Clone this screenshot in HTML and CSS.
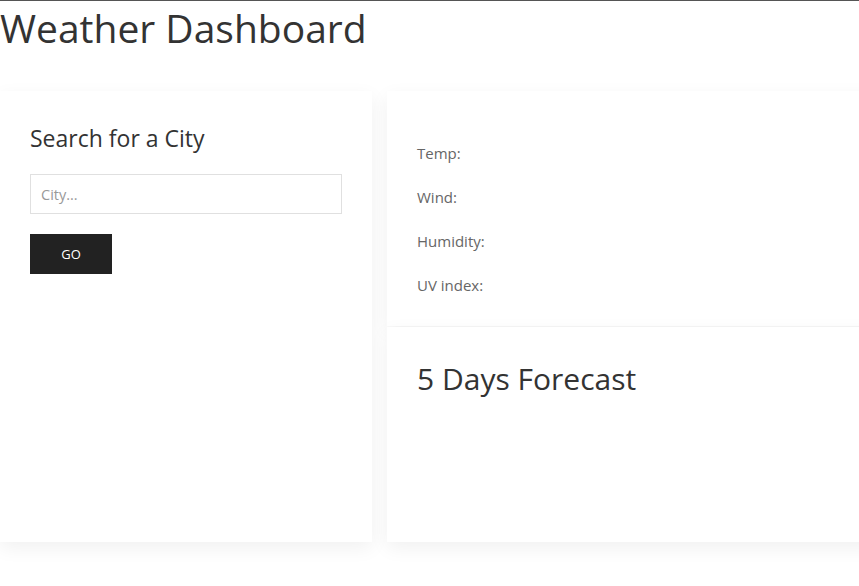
FILE: index.html
```html
<!DOCTYPE html>
<html lang="en">
<head>
<meta charset="utf-8">
<title>Weather Dashboard</title>
<link rel="stylesheet" href="styles.css">
</head>
<body>
<header class="top">
  <h1 class="title">Weather Dashboard</h1>
</header>
<main class="layout">
  <section class="card search">
    <h2 class="search-title">Search for a City</h2>
    <input class="city-input" type="text" placeholder="City...">
    <button class="go-btn" type="button">GO</button>
  </section>
  <div class="right">
    <section class="card current">
      <p class="stat">Temp:</p>
      <p class="stat">Wind:</p>
      <p class="stat">Humidity:</p>
      <p class="stat">UV index:</p>
    </section>
    <section class="card forecast">
      <h2 class="forecast-title">5 Days Forecast</h2>
    </section>
  </div>
</main>
</body>
</html>
```

FILE: styles.css
```css
html, body {
  margin: 0;
  padding: 0;
  overflow: hidden;
}
body {
  font-family: "Open Sans", "Noto Sans", sans-serif;
  color: #333;
  background: #fff;
  width: 859px;
  height: 586px;
}
.top {
  border-top: 1px solid #555;
}
.title {
  margin: 0;
  font-size: 39px;
  font-weight: 400;
  line-height: 54px;
  color: #333;
}
.layout {
  display: grid;
  grid-template-columns: 372px 490px;
  column-gap: 15px;
  margin-top: 36px;
}
.card {
  background: #fff;
  box-shadow: 0 6px 18px rgba(0, 0, 0, 0.06);
}
.search {
  padding: 30px 30px 0 30px;
  height: 451px;
  box-sizing: border-box;
  display: flex;
  flex-direction: column;
  align-items: flex-start;
}
.search-title {
  margin: 0;
  font-size: 23px;
  font-weight: 400;
  line-height: 34px;
  color: #333;
}
.city-input {
  margin-top: 19px;
  width: 312px;
  height: 40px;
  box-sizing: border-box;
  border: 1px solid #e0e0e0;
  padding: 0 10px;
  font-family: "Open Sans", sans-serif;
  font-size: 14.5px;
  color: #333;
  outline: none;
}
.city-input::placeholder {
  color: #999;
}
.go-btn {
  margin-top: 20px;
  width: 82px;
  height: 40px;
  border: 0;
  background: #222;
  color: #fff;
  font-family: "Open Sans", sans-serif;
  font-size: 13px;
}
.right {
  display: flex;
  flex-direction: column;
  gap: 1px;
}
.current {
  height: 235px;
  box-sizing: border-box;
  padding: 50px 30px 0 30px;
}
.stat {
  margin: 0;
  font-size: 15px;
  line-height: 24px;
  color: #666;
}
.stat + .stat {
  margin-top: 20px;
}
.forecast {
  height: 215px;
  box-sizing: border-box;
  padding: 32px 30px 0 30px;
}
.forecast-title {
  margin: 0;
  font-size: 30px;
  font-weight: 400;
  line-height: 40px;
  color: #333;
}
```
